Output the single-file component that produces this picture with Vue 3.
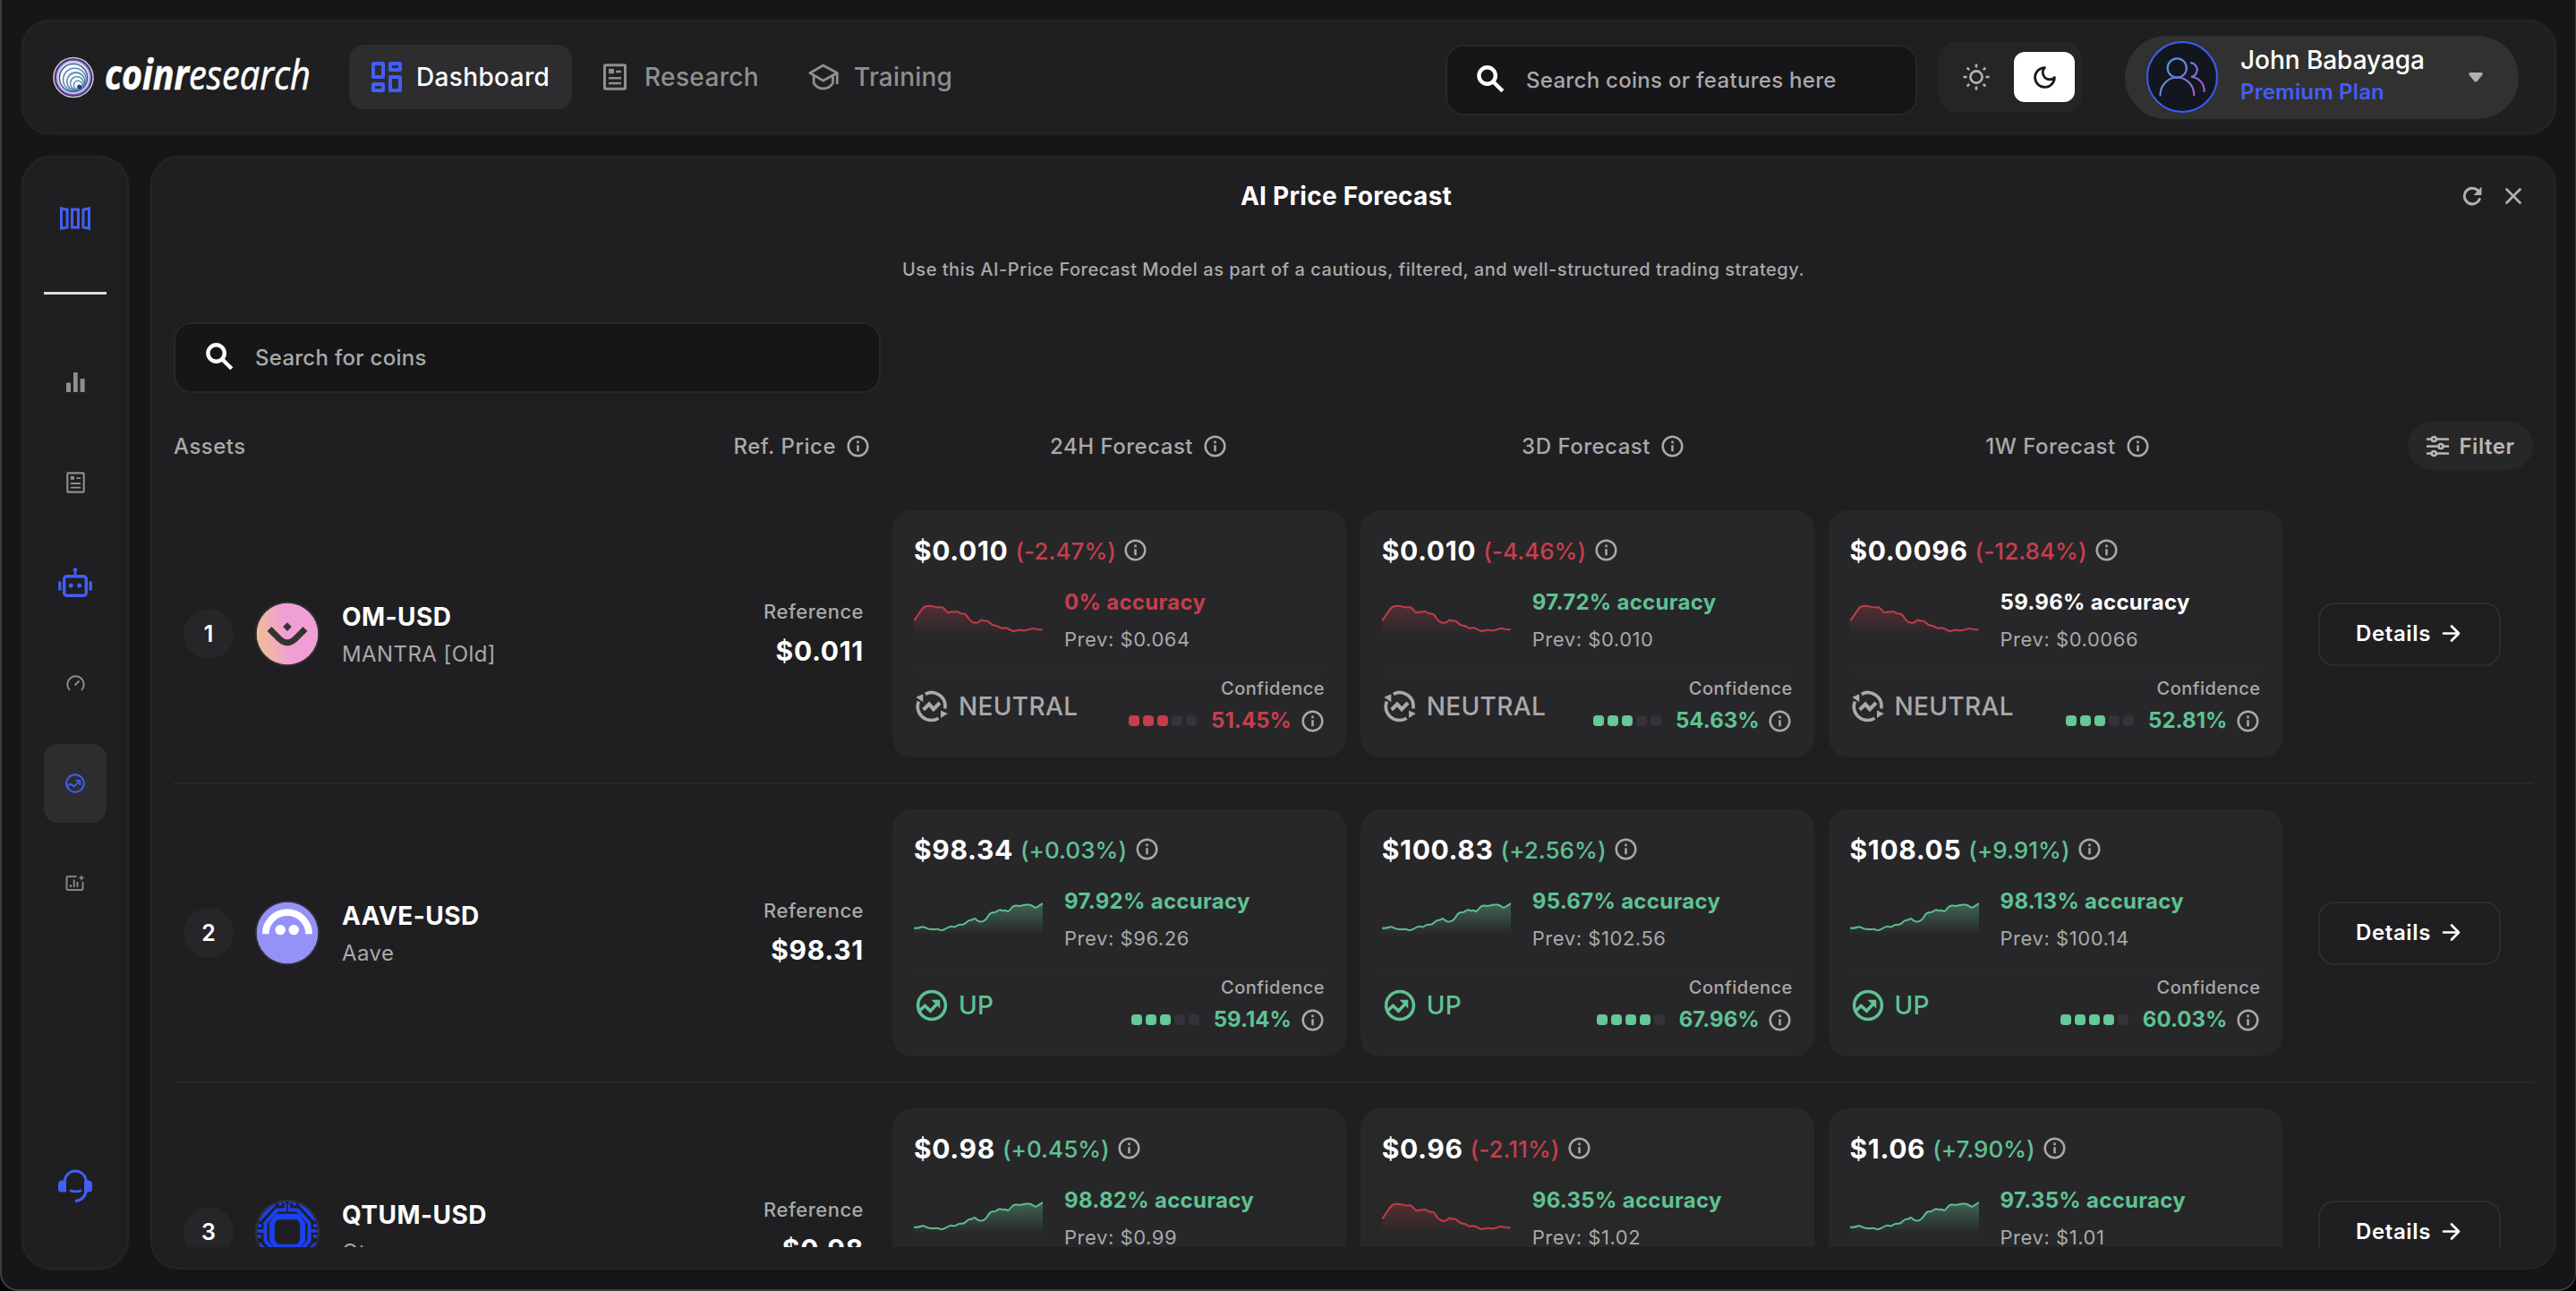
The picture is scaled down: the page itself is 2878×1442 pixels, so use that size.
<script setup>
import { h } from 'vue'

const redPoints = [[94,461],[108,440],[120,420],[130,412],[150,411],[168,417],[185,415],[195,424],[203,436],[215,430],[222,433],[232,428],[244,438],[258,437],[266,448],[276,463],[290,469],[300,467],[312,457],[320,462],[332,461],[346,477],[362,478],[376,488],[388,483],[404,492],[416,497],[430,491],[440,494],[460,493],[478,485],[492,491],[508,491]]
const greenPoints = [[62,438],[70,438],[77,432],[86,441],[96,442],[101,440],[108,446],[118,436],[124,431],[129,436],[136,426],[144,428],[152,413],[158,413],[162,406],[168,418],[176,418],[182,408],[188,389],[196,390],[203,379],[208,385],[213,381],[217,389],[226,366],[236,370],[246,364],[256,366],[262,376],[268,368],[274,361]]

// Smooths a polyline by running quadratic curves through segment midpoints.
function smooth(points) {
  let d = `M${points[0]}`
  for (let i = 1; i < points.length - 1; i++) {
    const [x, y] = points[i]
    const [nx, ny] = points[i + 1]
    d += ` Q${x},${y} ${(x + nx) / 2},${(y + ny) / 2}`
  }
  return d + ` L${points[points.length - 1]}`
}

const sparks = {
  down: { line: smooth(redPoints), box: '93 403 416 108', close: ' V511 H94 Z' },
  up: { line: smooth(greenPoints), box: '62 358 212 100', close: ' V458 H62 Z' }
}

const InfoIcon = () => h('svg', { class: 'info-icon', width: 25, height: 25, viewBox: '0 0 25 25', fill: 'none', stroke: '#a9a9a9', 'stroke-width': 2.5 }, [
  h('circle', { cx: 12.5, cy: 12.5, r: 10.8 }),
  h('path', { d: 'M12.5 11.3v7M12.5 6.6v2.6' })
])

const columns = ['24H Forecast', '3D Forecast', '1W Forecast']

const rows = [
  { n: 1, coin: 'om', pair: 'OM-USD', name: 'MANTRA [Old]', ref: '$0.011', cards: [
    { price: '$0.010', change: '(-2.47%)', dir: 'down', acc: '0%', tone: 'red', prev: '$0.064', signal: 'NEUTRAL', dots: 3, conf: '51.45%', ctone: 'red' },
    { price: '$0.010', change: '(-4.46%)', dir: 'down', acc: '97.72%', tone: 'green', prev: '$0.010', signal: 'NEUTRAL', dots: 3, conf: '54.63%', ctone: 'green' },
    { price: '$0.0096', change: '(-12.84%)', dir: 'down', acc: '59.96%', tone: 'white', prev: '$0.0066', signal: 'NEUTRAL', dots: 3, conf: '52.81%', ctone: 'green' }
  ] },
  { n: 2, coin: 'aave', pair: 'AAVE-USD', name: 'Aave', ref: '$98.31', cards: [
    { price: '$98.34', change: '(+0.03%)', dir: 'up', acc: '97.92%', tone: 'green', prev: '$96.26', signal: 'UP', dots: 3, conf: '59.14%', ctone: 'green' },
    { price: '$100.83', change: '(+2.56%)', dir: 'up', acc: '95.67%', tone: 'green', prev: '$102.56', signal: 'UP', dots: 4, conf: '67.96%', ctone: 'green' },
    { price: '$108.05', change: '(+9.91%)', dir: 'up', acc: '98.13%', tone: 'green', prev: '$100.14', signal: 'UP', dots: 4, conf: '60.03%', ctone: 'green' }
  ] },
  { n: 3, coin: 'qtum', pair: 'QTUM-USD', name: 'Qtum', ref: '$0.98', cards: [
    { price: '$0.98', change: '(+0.45%)', dir: 'up', acc: '98.82%', tone: 'green', prev: '$0.99' },
    { price: '$0.96', change: '(-2.11%)', dir: 'down', hover: true, acc: '96.35%', tone: 'green', prev: '$1.02' },
    { price: '$1.06', change: '(+7.90%)', dir: 'up', acc: '97.35%', tone: 'green', prev: '$1.01' }
  ] }
]
</script>

<template>
  <div class="window">
    <header class="topbar">
      <div class="logo">
        <svg width="46" height="47" viewBox="0 0 46 47" fill="none">
          <circle cx="23" cy="23.5" r="22" fill="#2b2440" stroke="#c9c6d6" stroke-width="1.6" />
          <circle cx="23" cy="23.5" r="19.3" fill="#d9d0ee" stroke="#7c5fc0" stroke-width="1.6" />
          <circle cx="23" cy="24" r="15.6" fill="#f4f7fb" stroke="#2f5f8f" stroke-width="1.4" />
          <circle cx="24.4" cy="26" r="12.8" stroke="#4d7ba6" stroke-width="1.3" />
          <circle cx="25.8" cy="28" r="10" stroke="#4d7ba6" stroke-width="1.3" />
          <circle cx="27" cy="30" r="7.4" stroke="#4d7ba6" stroke-width="1.2" />
          <circle cx="28.2" cy="32" r="4.8" stroke="#4d7ba6" stroke-width="1.2" />
          <circle cx="29.6" cy="34" r="2.5" fill="#1d3f80" />
        </svg>
        <svg class="wordmark" width="244" height="72" viewBox="0 0 244 72">
          <text x="1" y="51" class="word bold" textLength="94" lengthAdjust="spacingAndGlyphs">coinr</text>
          <text x="95" y="51" class="word" textLength="136" lengthAdjust="spacingAndGlyphs">esearch</text>
        </svg>
      </div>
      <nav class="nav">
        <a class="nav-item active">
          <svg width="34" height="34" viewBox="0 0 34 34" fill="none" stroke="#435ef5" stroke-width="4">
            <rect x="2" y="2" width="11" height="15" rx=".5" /><rect x="21" y="2" width="11" height="7" rx=".5" />
            <rect x="2" y="25" width="11" height="7" rx=".5" /><rect x="21" y="17" width="11" height="15" rx=".5" />
          </svg>
          Dashboard
        </a>
        <a class="nav-item research">
          <svg width="26" height="30" viewBox="0 0 26 30" fill="none" stroke="#8f8f8f">
            <rect x="1.5" y="1.7" width="23" height="26.6" rx="1" stroke-width="3" />
            <path d="M6 8.5h6" stroke-width="5.4" /><path d="M14 9h6M6 16.2h14M6 22h14" stroke-width="2.4" />
          </svg>
          Research
        </a>
        <a class="nav-item training">
          <svg width="34" height="30" viewBox="0 0 34 30" fill="none" stroke="#8f8f8f" stroke-width="2.8" stroke-linejoin="round">
            <path d="M16.7 2L2 10.5l14.7 8.6 15.6-8.6zM32.3 10.5V23M6.2 13.5V22q4 6 10.5 6t10.8-6v-8.5" />
          </svg>
          Training
        </a>
      </nav>
      <div class="search top-search">
        <svg width="31" height="31" viewBox="0 0 31 31" fill="none" stroke="#fff" stroke-width="4.4"><circle cx="11.6" cy="11.5" r="9.2" /><path d="M18.5 18.5l10.3 10.3" /></svg>
        <span>Search coins or features here</span>
      </div>
      <div class="theme">
        <svg class="sun" width="30" height="30" viewBox="0 0 30 30" fill="none" stroke="#b4b4b4" stroke-width="2.6">
          <circle cx="15" cy="15" r="6.6" />
          <path d="M15 .5v4M15 25.500v4M.5 15h4M25.500 15h4M4.700 4.700l2.500 2.500M22.800 22.800l2.500 2.500M4.700 25.300l2.500-2.500M22.800 7.200l2.500-2.500" />
        </svg>
        <div class="moon">
          <svg width="29" height="29" viewBox="0 0 24 24" fill="none" stroke="#1b1b1d" stroke-width="2.3" stroke-linejoin="round"><path d="M12 3a6 6 0 0 0 9 9 9 9 0 1 1-9-9Z" /></svg>
        </div>
      </div>
      <div class="profile">
        <svg class="avatar" width="80" height="80" viewBox="0 0 80 80" fill="none">
          <defs><linearGradient id="users" x1="16" y1="20" x2="64" y2="60" gradientUnits="userSpaceOnUse"><stop offset=".1" stop-color="#4a9bdc" /><stop offset=".9" stop-color="#a45bd0" /></linearGradient></defs>
          <circle cx="40" cy="40" r="39" fill="#12161f" stroke="#3f5bf5" stroke-width="2" />
          <g stroke="url(#users)" stroke-width="2.2" stroke-linecap="round">
            <circle cx="34.3" cy="30" r="10.6" />
            <path d="M15.500 60.300a18.900 19.800 0 0 1 37.800 0M50 24.200a8 8 0 0 1 0 15.800c8 0 14.700 7 14.700 16" />
          </g>
        </svg>
        <div class="who"><div class="who-name">John Babayaga</div><div class="who-plan">Premium Plan</div></div>
        <svg class="caret" width="16" height="11" viewBox="0 0 16 11"><path d="M2 0h12q2 0 1.800 2L9.700 9.800q-1.700 1.600-3.400 0L.2 2Q0 0 2 0z" fill="#b0b0b0" /></svg>
      </div>
    </header>

    <div class="body">
      <aside class="sidebar">
        <svg width="34" height="26" viewBox="0 0 34 26" fill="none" stroke="#435ef5" stroke-width="3">
          <path d="M1.500 1.800l6.600 1.400v19.600l-6.600 1.400zM32.500 1.800l-6.600 1.400v19.600l6.600 1.400zM13.500 2.900h7v20.200h-7z" />
        </svg>
        <div class="rule"></div>
        <div class="side-items">
          <div class="side-item"><svg width="21" height="22" viewBox="0 0 21 22" fill="#8f8f8f"><path d="M0 11.500h5V22H0zM8 0h4.800v22H8zM15.600 7h5v15h-5z" /></svg></div>
          <div class="side-item">
            <svg width="21" height="24" viewBox="0 0 26 30" fill="none" stroke="#8f8f8f"><rect x="1.5" y="1.7" width="23" height="26.6" rx="1" stroke-width="2.600" /><path d="M6 8.500h5" stroke-width="5" /><path d="M14 9h6M6 16.200h14M6 22h14" stroke-width="2.300" /></svg>
          </div>
          <div class="side-item">
            <svg width="38" height="34" viewBox="0 0 38 34" fill="none" stroke="#435ef5">
              <rect x="6.7" y="9.7" width="24.6" height="21.5" rx="3" stroke-width="3.4" /><path d="M19 2v7" stroke-width="2.600" /><path d="M1.800 15.500v10M36.200 15.500v10" stroke-width="3.400" />
              <g fill="#435ef5" stroke="none"><circle cx="19" cy="2.6" r="2.4" /><circle cx="14.3" cy="20" r="2.5" /><circle cx="23.7" cy="20" r="2.5" /></g>
            </svg>
          </div>
          <div class="side-item"><svg width="21" height="18" viewBox="0 0 21 18" fill="none" stroke="#8f8f8f" stroke-width="1.9"><path d="M4 17a9.200 9.200 0 1 1 13 0M9.500 11.500l5-5" /></svg></div>
          <div class="side-item on">
            <svg width="22" height="22" viewBox="0 0 35 35" fill="none" stroke="#435ef5" stroke-width="3"><circle cx="17.5" cy="17.5" r="15.5" /><path d="M3 23.500l6.500-5 6 4.500 9-8.500M18 12.500h8v8" stroke-width="2.800" /></svg>
          </div>
          <div class="side-item">
            <svg width="22" height="19" viewBox="0 0 22 19" fill="none" stroke="#858585" stroke-width="2"><path d="M12.500 2H3Q1.500 2 1.500 3.500V15.500Q1.500 17 3 17H18Q19.500 17 19.500 15.500V8M6 14v-3M9.700 14V5.500M13.500 14V8" /><path d="M18 0l1.100 2.400L21.500 3.500l-2.400 1.100L18 7l-1.100-2.400L14.500 3.500l2.400-1.100z" fill="#858585" stroke="none" /></svg>
          </div>
        </div>
        <svg class="support" width="38" height="38" viewBox="0 0 38 38" fill="none" stroke="#435ef5" stroke-width="3">
          <path d="M7 15a12.200 13 0 0 1 24.400 0M31.500 23q-1.500 11.500-12.500 12.500" /><path d="M13 23.500q6.500 3 13 0" stroke-width="2.600" />
          <path d="M9 12.500H4.500Q0 12.500 0 17v5q0 3.500 3.500 3.500H9zM29 12.500h4.500Q38 12.500 38 17v5q0 3.500-3.500 3.500H29z" fill="#435ef5" stroke="none" />
        </svg>
      </aside>

      <main class="panel">
        <div class="title-row">
          <span></span>
          <h1>AI Price Forecast</h1>
          <div class="title-actions">
            <svg width="22" height="22" viewBox="0 0 22 22" fill="none" stroke="#b0b0b0" stroke-width="3"><path d="M19.200 14.500A8.800 8.800 0 1 1 17.500 5" stroke-linecap="round" /><path d="M21 1.500v8h-7.500z" fill="#b0b0b0" stroke-width="1" stroke-linejoin="round" /></svg>
            <svg width="20" height="20" viewBox="0 0 20 20" fill="none" stroke="#b0b0b0" stroke-width="2.8" stroke-linecap="round"><path d="M2.500 2.500l15 15M17.500 2.500l-15 15" /></svg>
          </div>
        </div>
        <p class="subtitle">Use this AI-Price Forecast Model as part of a cautious, filtered, and well-structured trading strategy.</p>
        <div class="search coin-search">
          <svg width="31" height="31" viewBox="0 0 31 31" fill="none" stroke="#fff" stroke-width="4.4"><circle cx="11.6" cy="11.5" r="9.2" /><path d="M18.5 18.5l10.3 10.3" /></svg>
          <span>Search for coins</span>
        </div>
        <div class="head">
          <div class="head-left"><span>Assets</span><span class="head-cell">Ref. Price <InfoIcon /></span></div>
          <div v-for="c in columns" :key="c" class="head-cell col">{{ c }} <InfoIcon /></div>
          <button class="filter">
            <svg width="25" height="25" viewBox="0 0 25 25" fill="none" stroke="#b8b8b8" stroke-width="2.6">
              <path d="M0 4.500h5.500M11 4.500h14M0 12.500h13M19 12.500h6M0 20.500h5.500M11 20.500h14" /><circle cx="8.3" cy="4.5" r="2.5" /><circle cx="16" cy="12.5" r="2.5" /><circle cx="8.3" cy="20.5" r="2.5" />
            </svg>
            Filter
          </button>
        </div>
        <div class="list">
          <section v-for="r in rows" :key="r.n" class="row">
            <div class="asset">
              <div class="num">{{ r.n }}</div>
              <svg class="coin" width="72" height="72" viewBox="0 0 72 72">
                <template v-if="r.coin === 'om'">
                  <defs><linearGradient id="om" x1="0" x2="1" y1=".6" y2=".4"><stop offset=".05" stop-color="#efbd98" /><stop offset=".48" stop-color="#f09fd5" /></linearGradient></defs>
                  <circle cx="36" cy="36" r="34.5" fill="url(#om)" />
                  <path d="M16 30.500l11.500 11.500q8.500 7.500 17 0L56 30.500" fill="none" stroke="#343334" stroke-width="6.800" />
                  <path d="M36 23.200l4.800 4.900-4.800 4.900-4.800-4.900z" fill="#343334" />
                </template>
                <template v-else-if="r.coin === 'aave'">
                  <circle cx="36" cy="36" r="34.5" fill="#9492f8" />
                  <path d="M11.700 37.300a24.200 24.200 0 0 1 48.400 0" fill="none" stroke="#fff" stroke-width="7.600" />
                  <circle cx="28.2" cy="32.6" r="5.7" fill="#fff" /><circle cx="43.2" cy="32.6" r="5.7" fill="#fff" />
                </template>
                <template v-else>
                  <defs><clipPath id="disc"><circle cx="36" cy="36" r="34" /></clipPath></defs>
                  <g clip-path="url(#disc)" fill="none" stroke="#1b40f0">
                    <path d="M24.500 18.500h23l6 8.500v18l-6 8.500h-23l-6-8.500V27z" stroke-width="5.400" />
                    <path d="M21 21.500h30v29H21z" stroke-width="1.500" />
                    <path d="M34 11.500H24.500L11.500 26v20L24.500 60.500M38 11.500h9.500L60.500 26v20L47.500 60.500" stroke-width="4.200" />
                    <path d="M34 4.500v9M38 4.500v9" stroke-width="2.400" />
                    <path d="M22 4L4 23M50 4l18 19M4 49L22 68M68 49L50 68" stroke-width="4.600" />
                    <path d="M28 1.500v5M44 1.500v5M32.500 1v3M39.500 1v3M2 29h5M2 35h9M2 41h5M65 29h5M61 35h9M65 41h5" stroke-width="3.600" />
                  </g>
                </template>
                <circle cx="36" cy="36" r="35.2" fill="none" stroke="#343437" stroke-width="1.6" />
              </svg>
              <div class="names"><div class="pair">{{ r.pair }}</div><div class="name">{{ r.name }}</div></div>
              <div class="ref"><div class="ref-label">Reference</div><div class="ref-price">{{ r.ref }}</div></div>
            </div>
            <div class="cards">
              <article v-for="(c, i) in r.cards" :key="i" class="card" :class="{ hover: c.hover }">
                <div class="price-row"><b>{{ c.price }}</b><span class="change" :class="c.dir === 'up' ? 'green' : 'red'">{{ c.change }}</span><InfoIcon /></div>
                <div class="mid">
                  <svg class="spark" width="144" height="36" :viewBox="sparks[c.dir].box" preserveAspectRatio="none">
                    <defs><linearGradient :id="`g${r.n}${i}`" x1="0" x2="0" y1="0" y2="1"><stop offset="0" :stop-color="c.dir === 'up' ? '#66c797' : '#c63e4c'" :stop-opacity="c.dir === 'up' ? .38 : .28" /><stop offset="1" :stop-color="c.dir === 'up' ? '#66c797' : '#c63e4c'" stop-opacity="0" /></linearGradient></defs>
                    <path :d="sparks[c.dir].line + sparks[c.dir].close" :fill="`url(#g${r.n}${i})`" />
                    <path :d="sparks[c.dir].line" fill="none" :stroke="c.dir === 'up' ? '#5dbd8d' : '#c23c4a'" stroke-width="2" vector-effect="non-scaling-stroke" />
                  </svg>
                  <div><div class="acc" :class="c.tone">{{ c.acc }} accuracy</div><div class="prev">Prev: {{ c.prev }}</div></div>
                </div>
                <div v-if="c.signal" class="foot">
                  <div class="signal" :class="{ green: c.signal === 'UP' }">
                    <svg v-if="c.signal === 'UP'" width="36" height="36" viewBox="0 0 35 35" fill="none" stroke="currentColor" stroke-width="3.5"><circle cx="17.5" cy="17.5" r="15" /><path d="M3.500 24l6.500-6 6 5.500 8-8.500" /><path d="M17 11.500h9.500V21z" fill="currentColor" stroke="none" /></svg>
                    <svg v-else width="36" height="36" viewBox="0 0 36 36" fill="none" stroke="currentColor" stroke-width="3.7"><path d="M10.800 4.300A15.200 15.200 0 0 1 32.700 20.500M25.500 31.200A15.200 15.200 0 0 1 3.400 12.500" /><path d="M.3 7.700L8.300 4.300v9zM28 22.500l7.800 3.500-7.800 5z" fill="currentColor" stroke="none" /><path d="M8.700 21.700l6.300-6.200 5 5.600 7-7.100" stroke-width="4.200" /></svg>
                    {{ c.signal }}
                  </div>
                  <div class="conf">
                    <div class="conf-label">Confidence</div>
                    <div class="conf-row">
                      <div class="dots" :class="c.ctone"><i v-for="d in 5" :key="d" :class="{ fill: d <= c.dots }"></i></div>
                      <span class="pct" :class="c.ctone">{{ c.conf }}</span><InfoIcon />
                    </div>
                  </div>
                </div>
              </article>
            </div>
            <button class="details">Details <svg width="21" height="21" viewBox="0 0 21 21" fill="none" stroke="#fff" stroke-width="2.7" stroke-linecap="round" stroke-linejoin="round"><path d="M2 10.500h17M11 2.500l8 8-8 8" /></svg></button>
          </section>
        </div>
      </main>
    </div>
  </div>
</template>

<style>
html, body { background: #050505; }
</style>

<style scoped>
* { box-sizing: border-box; }
.window {
  width: 2878px; height: 1442px; padding: 22px 21px 22px 22px; overflow: hidden;
  display: flex; flex-direction: column; gap: 24px;
  background: #161618; border: solid #3e3e40; border-width: 0 1px 2px 2px; border-radius: 0 0 20px 20px;
  font-family: Inter, sans-serif; color: #a9a9a9;
}
svg { display: block; flex: none; }
button { font: inherit; color: inherit; border: 0; margin: 0; }
.topbar, .sidebar, .panel { background: #1f1f21; border: 2px solid #252527; border-radius: 32px; }
.topbar, .sidebar { box-shadow: 0 0 5px rgba(255, 255, 255, .045); }
.topbar { height: 128px; flex: none; display: flex; align-items: center; padding-left: 33px; }
.logo { display: flex; align-items: center; gap: 11px; width: 331px; flex: none; }
.word { font: italic 400 46px "Open Sans", sans-serif; fill: #fff; stroke: #fff; stroke-width: .6px; }
.word.bold { font-weight: 700; }
.wordmark { margin-top: -2px; }
.nav { display: flex; align-items: center; }
.nav-item { display: flex; align-items: center; height: 72px; font-size: 28px; font-weight: 500; letter-spacing: .35px; color: #8f8f8f; }
.nav-item.active { width: 249px; padding-left: 25px; gap: 16px; border-radius: 16px; background: #2d2d30; color: #fff; }
.research { margin-left: 35px; gap: 20px; }
.training { margin-left: 55px; gap: 17px; letter-spacing: .2px; }
.search { display: flex; align-items: center; background: #161618; border: 2px solid #27272a; border-radius: 20px; height: 79px; font-size: 24px; font-weight: 500; letter-spacing: .3px; }
.search svg { margin-top: -3px; }
.top-search { width: 527px; margin: 7px 0 0 auto; padding-left: 33px; gap: 24px; }
.theme { display: flex; align-items: center; justify-content: space-between; width: 160px; height: 80px; margin-left: 24px; padding: 0 8px 0 27px; background: #252527; border-radius: 20px; }
.moon { width: 68px; height: 56px; border-radius: 12px; background: #fff; display: grid; place-items: center; }
.profile { display: flex; align-items: center; width: 440px; height: 93px; margin: 0 40px 0 48px; padding-left: 24px; background: #313131; border-radius: 47px; }
.who { margin-left: 25px; line-height: 36px; margin-top: -2px; }
.who-name { font-size: 28px; font-weight: 500; letter-spacing: -.05px; color: #fff; }
.who-plan { font-size: 24px; font-weight: 600; letter-spacing: .15px; color: #435ef5; }
.caret { margin: 0 40px 0 auto; }

.body { display: flex; gap: 24px; flex: 1; min-height: 0; }
.sidebar { width: 120px; flex: none; display: flex; flex-direction: column; align-items: center; padding: 55px 0 72px; border-radius: 34px; }
.rule { width: 70px; height: 3px; margin-top: 69px; background: #dcdcdc; flex: none; }
.side-items { display: flex; flex-direction: column; gap: 23.9px; margin-top: 54px; }
.side-item { width: 70px; height: 88px; border-radius: 16px; display: grid; place-items: center; }
.side-item.on { background: #2d2d30; }
.support { margin-top: auto; }

.panel { flex: 1; min-width: 0; display: flex; flex-direction: column; padding: 0 24px 23px; }
.title-row { height: 86px; flex: none; display: grid; grid-template-columns: 1fr auto 1fr; align-items: center; padding-right: 12px; }
h1 { margin: 0 4px 0 0; font-size: 28px; font-weight: 700; letter-spacing: .27px; color: #fff; }
.title-actions { display: flex; gap: 25px; justify-content: flex-end; align-items: center; }
.subtitle { margin: 24px 0 44px; text-align: center; font-size: 20px; line-height: 30px; font-weight: 500; letter-spacing: .52px; }
.coin-search { width: 790px; flex: none; padding-left: 34px; gap: 24px; letter-spacing: .27px; }
.head { display: flex; align-items: center; height: 54px; flex: none; margin: 32px 0 17px; font-size: 24px; font-weight: 500; letter-spacing: .5px; }
.head-left { width: 777px; margin-right: 41px; display: flex; justify-content: space-between; }
.head-cell { display: flex; align-items: center; gap: 12px; }
.col { width: 519px; justify-content: center; }
.filter { margin-left: auto; width: 140px; height: 54px; border-radius: 27px; background: #272727; display: flex; align-items: center; justify-content: center; gap: 12px; padding: 0; font-weight: 600; letter-spacing: .5px; color: #b8b8b8; }
.list { flex: 1; min-height: 0; overflow: hidden; }
.row { display: flex; align-items: center; height: 334px; border-bottom: 2px solid #28282a; }
.asset { width: 803px; display: flex; align-items: center; padding: 0 32px 0 11px; }
.num { width: 56px; height: 56px; border-radius: 50%; background: #262628; display: grid; place-items: center; font-size: 25px; font-weight: 600; color: #fff; }
.coin { margin-left: 24px; }
.names { margin: 3px 0 0 25px; line-height: 42px; }
.pair { font-size: 28px; font-weight: 700; letter-spacing: .45px; color: #fff; }
.name { font-size: 24px; letter-spacing: .42px; }
.ref { margin: 0 0 7px auto; text-align: right; line-height: 44px; }
.ref-label { font-size: 22px; font-weight: 500; letter-spacing: .5px; }
.ref-price { font-size: 30px; font-weight: 700; letter-spacing: .7px; color: #fff; }
.cards { display: flex; gap: 15.75px; width: 1552.5px; }
.card { flex: 1; height: 276px; padding: 24px 24px 0; border-radius: 22px; background: #272729; }
.card.hover { background: #282828; }
.price-row { display: flex; align-items: center; height: 41px; }
.price-row b { font-size: 30px; font-weight: 700; letter-spacing: .65px; color: #fff; }
.change { margin: 1px 9.500px 0 8px; font-size: 26px; font-weight: 500; letter-spacing: .05px; }
.mid { display: flex; align-items: center; height: 84px; margin: 16px 0 14px; line-height: 42px; gap: 24px; }
.spark { margin-top: -2px; }
.acc { font-size: 24px; font-weight: 650; letter-spacing: .3px; }
.prev { font-size: 22px; letter-spacing: .55px; margin-top: -1px; }
.foot { display: flex; justify-content: space-between; border-top: 2px solid #29292b; height: 74px; }
.signal { display: flex; align-items: center; gap: 12px; padding-left: 2px; height: 75px; font-size: 28px; font-weight: 500; letter-spacing: .35px; }
.conf { line-height: 36px; text-align: right; }
.conf-label { font-size: 20px; font-weight: 500; letter-spacing: .5px; }
.conf-row { display: flex; align-items: center; justify-content: flex-end; padding-right: 1.500px; }
.dots { display: flex; gap: 4px; margin-right: 16px; }
.dots i { width: 12px; height: 12px; border-radius: 4px; background: #343339; }
.dots.green i.fill { background: #66c797; }
.dots.red i.fill { background: #c63e4c; }
.pct { font-size: 24px; font-weight: 650; letter-spacing: .05px; margin-right: 10.500px; }
.green { color: #5fc292; }
.red { color: #c63e4c; }
.white { color: #fff; }
.details { width: 204px; height: 71px; margin-left: 40px; padding: 0 2px 2px 0; border: 2px solid #2d2d30; border-radius: 18px; background: transparent; color: #fff; font-size: 24px; font-weight: 600; letter-spacing: .6px; display: flex; align-items: center; justify-content: center; gap: 12px; }
</style>
